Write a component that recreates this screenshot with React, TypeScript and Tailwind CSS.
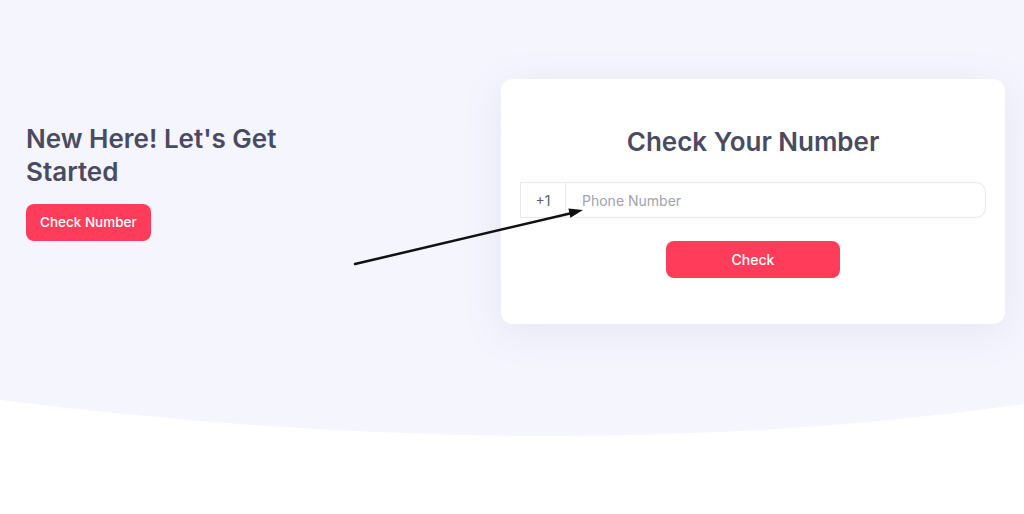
export default function App() {
  return (
    <main
      className="relative min-h-screen bg-white overflow-hidden"
      style={{ fontFamily: "Inter, 'Liberation Sans', sans-serif" }}
    >
      {/* lavender hero */}
      <section className="bg-[#f5f5fe] h-[400px] flex pl-[26px] pr-[19px] pt-[79px]">
        <div className="flex-1 pt-[43px]">
          <h1 className="text-[26px] leading-[33px] font-semibold text-[#4a4b60] w-[300px]">
            New Here! Let's Get Started
          </h1>
          <button className="mt-[16px] h-[37px] px-[14px] rounded-[8px] bg-[#ff3d5b] text-white text-[13.5px] font-medium">
            Check Number
          </button>
        </div>

        {/* card */}
        <div className="w-[504px] h-[245px] bg-white rounded-[12px] shadow-[0_8px_40px_rgba(120,120,170,0.12)] px-[19px] pt-[47px] flex flex-col items-center">
          <h2 className="text-[26px] leading-[32px] font-semibold text-[#4a4b60]">Check Your Number</h2>
          <div className="mt-[24px] w-full h-[36px] flex">
            <div className="w-[46px] flex items-center justify-center border border-[#e8e8ef] text-[14px] text-[#5e606c] bg-white">
              +1
            </div>
            <div className="flex-1 flex items-center border border-l-0 border-[#e8e8ef] rounded-r-[10px] pl-[16px] text-[14px] text-[#a2a3ad]">
              Phone Number
            </div>
          </div>
          <button className="mt-[23px] w-[174px] h-[37px] rounded-[8px] bg-[#ff3d5b] text-white text-[14px] font-medium">
            Check
          </button>
        </div>
      </section>

      {/* curved bottom edge */}
      <svg className="block w-full h-[40px]" viewBox="0 0 1024 40" preserveAspectRatio="none">
        <path d="M0 0 H1024 V4 Q560 70 0 0 Z" fill="#f5f5fe" />
      </svg>

      {/* annotation arrow */}
      <svg className="absolute inset-0 pointer-events-none" width="1024" height="514" viewBox="0 0 1024 514">
        <line x1="355" y1="264" x2="572" y2="213" stroke="#111" strokeWidth="2.5" strokeLinecap="round" />
        <polygon points="583,210 570.4,217.8 568.4,208.6" fill="#111" />
      </svg>
    </main>
  );
}
